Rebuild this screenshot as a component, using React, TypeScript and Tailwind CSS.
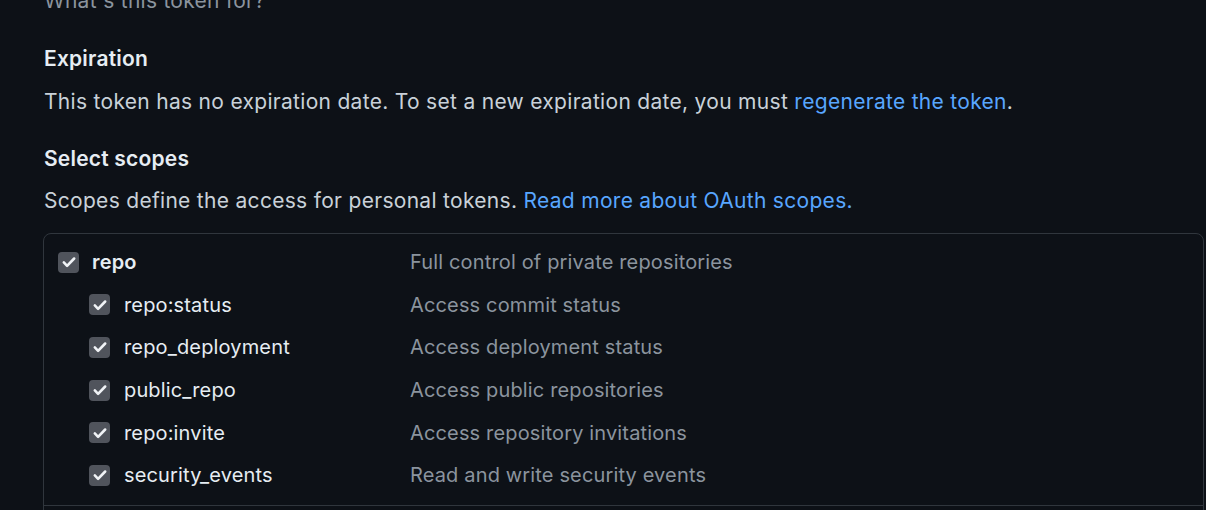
const scopes = [
  { name: "repo:status", desc: "Access commit status" },
  { name: "repo_deployment", desc: "Access deployment status" },
  { name: "public_repo", desc: "Access public repositories" },
  { name: "repo:invite", desc: "Access repository invitations" },
  { name: "security_events", desc: "Read and write security events" },
];

function Check() {
  return (
    <span className="flex h-[21px] w-[21px] shrink-0 items-center justify-center rounded-[4px] bg-[#50545c]">
      <svg viewBox="0 0 16 16" className="h-[18px] w-[18px]" fill="none">
        <path
          d="M3.4 8.4l2.9 3 6.3-6.5"
          stroke="#f0f3f6"
          strokeWidth="2.3"
          strokeLinecap="round"
          strokeLinejoin="round"
        />
      </svg>
    </span>
  );
}

export default function App() {
  return (
    <div
      className="h-[510px] overflow-hidden bg-[#0d1117] pl-[44px] text-[20px] text-[#c9d1d9]"
      style={{ fontFamily: "Inter, 'Noto Sans', sans-serif" }}
    >
      <div className="-mt-[14px] h-[30px] text-[21px] leading-[30px] tracking-[0.25px] text-[#8b949e]">
        What's this token for?
      </div>

      <h3 className="mt-[28px] h-[30px] text-[21px] font-semibold leading-[30px] tracking-[0.2px] text-[#e6edf3]">
        Expiration
      </h3>
      <p className="mt-[13px] h-[30px] text-[21px] leading-[30px] tracking-[0.3px]">
        This token has no expiration date. To set a new expiration date, you must{" "}
        <a className="text-[#58a6ff]">regenerate the token</a>.
      </p>

      <h3 className="mt-[27px] h-[30px] text-[21px] font-semibold leading-[30px] tracking-[0.2px] text-[#e6edf3]">
        Select scopes
      </h3>
      <p className="mt-[12px] h-[30px] text-[21px] leading-[30px] tracking-[0.3px]">
        Scopes define the access for personal tokens.{" "}
        <a className="text-[#58a6ff]">Read more about OAuth scopes.</a>
      </p>

      <div className="-ml-[1px] mt-[17px] w-[1161px] rounded-[8px] border border-[#30363d] tracking-[0.15px]">
        <div className="px-[14px] pb-[8px] pt-[7px]">
          <div className="flex h-[42.6px] items-center">
            <div className="flex w-[352px] items-center gap-[13px]">
              <Check />
              <span className="font-semibold text-[#e6edf3]">repo</span>
            </div>
            <span className="text-[#8b949e]">Full control of private repositories</span>
          </div>
          {scopes.map((s) => (
            <div key={s.name} className="flex h-[42.6px] items-center">
              <div className="flex w-[352px] items-center gap-[14px] pl-[31px]">
                <Check />
                <span className="text-[#e6edf3]">{s.name}</span>
              </div>
              <span className="text-[#8b949e]">{s.desc}</span>
            </div>
          ))}
        </div>
        <div className="h-[60px] border-t border-[#30363d]" />
      </div>
    </div>
  );
}
